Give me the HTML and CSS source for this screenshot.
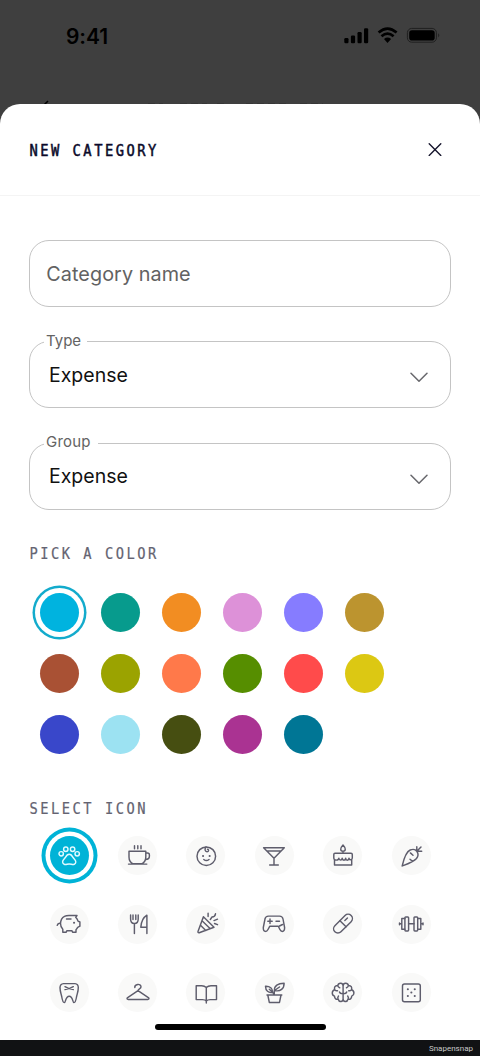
FILE: index.html
```html
<!DOCTYPE html>
<html lang="en">
<head>
<meta charset="utf-8">
<title>New category</title>
<link rel="stylesheet" href="styles.css">
</head>
<body>
<div class="screen">
  <div class="backdrop">
    <div class="status">
      <span class="time">9:41</span>
      <svg class="status-icons" width="98" height="18" viewBox="0 0 98 18">
        <rect x="0.3" y="11" width="4.2" height="5.2" rx="1.2"/>
        <rect x="6.9" y="8.5" width="4.2" height="7.7" rx="1.2"/>
        <rect x="13.5" y="5" width="4.2" height="11.2" rx="1.2"/>
        <rect x="20" y="1.3" width="4.2" height="14.9" rx="1.2"/>
        <path d="M34.6 5.6Q43.500-2.200 52.600 5.600M37.500 9.200Q43.500 4 49.600 9.200" fill="none" stroke="#000" stroke-width="2.700"/>
        <path d="M40 12Q43.500 9.200 47.100 12L43.500 16Z"/>
        <rect x="63.400" y="1.400" width="29" height="13.800" rx="4.300" fill="none" stroke="#202020" stroke-width="1"/>
        <rect x="65.200" y="3.200" width="25.500" height="10.300" rx="2.800"/>
        <path d="M94.200 6.200Q96.400 8.200 94.200 10.400Z" fill="#202020"/>
      </svg>
    </div>
    <svg class="nav-hint" width="480" height="8" viewBox="0 0 480 8">
      <path d="M48 5L41 12" fill="none" stroke="#000" stroke-width="1.500"/>
      <path d="M148 7.600H163M180 7.600H207M217 7.600H228M246 7.600H288M300 7.600H323" stroke="#363636" stroke-width="1" stroke-dasharray="7 4"/>
    </svg>
  </div>
  <main class="sheet">
    <header class="sheet-head">
      <h1 class="mono title">NEW CATEGORY</h1>
      <svg class="close" width="14" height="14" viewBox="0 0 14 14"><path d="M1.200 .8L12.800 12.400M12.800 .8L1.200 12.400"/></svg>
    </header>
    <div class="form">
      <div class="field"><span class="placeholder">Category name</span></div>
      <div class="field">
        <span class="label label-type">Type</span><span class="value">Expense</span>
        <svg class="chevron" width="18" height="11" viewBox="0 0 18 11"><path d="M1 1.200L9 9.300L17 1.200"/></svg>
      </div>
      <div class="field">
        <span class="label label-group">Group</span><span class="value">Expense</span>
        <svg class="chevron" width="18" height="11" viewBox="0 0 18 11"><path d="M1 1.200L9 9.300L17 1.200"/></svg>
      </div>
    </div>
    <h2 class="mono section">PICK A COLOR</h2>
    <div class="colors">
      <i class="swatch cyan picked"></i><i class="swatch teal"></i><i class="swatch orange"></i><i class="swatch pink"></i><i class="swatch violet"></i><i class="swatch bronze"></i>
      <i class="swatch rust"></i><i class="swatch olive"></i><i class="swatch coral"></i><i class="swatch green"></i><i class="swatch red"></i><i class="swatch yellow"></i>
      <i class="swatch blue"></i><i class="swatch sky"></i><i class="swatch moss"></i><i class="swatch magenta"></i><i class="swatch petrol"></i>
    </div>
    <h2 class="mono section section-icons">SELECT ICON</h2>
    <div class="icons">
      <div class="icon chosen"><svg viewBox="0 0 24 24"><circle cx="4.200" cy="9.800" r="2.200"/><circle cx="8.800" cy="5.200" r="2.200"/><circle cx="15.600" cy="5.200" r="2.200"/><circle cx="20.200" cy="9.800" r="2.200"/><path d="M12.200 10.200C10 10.200 9.400 11.500 8.600 13.200C7.700 14.800 5.400 15.700 5.600 18C5.800 20.500 8.200 20.800 10 20.200Q12.200 19.600 14.400 20.200C16.400 20.800 18.700 20.400 18.800 18C18.900 15.700 16.700 14.800 15.800 13.200C15 11.500 14.400 10.200 12.200 10.200Z"/></svg></div>
      <div class="icon"><svg viewBox="0 0 24 24"><path d="M3 7.200H19.800V13Q19.800 18 15.500 19.800H7.200Q3 18 3 13ZM19.800 9H21.500Q23.400 9 23.400 11V12.200Q23.400 15.400 19.500 15.400M2.500 20.100H20.800M8.500 1.700V4.700M11.800 1.700V4.700M15 1.700V4.700"/></svg></div>
      <div class="icon"><svg viewBox="0 0 24 24"><circle cx="12.300" cy="12.200" r="9.300"/><path d="M12 3C10.300 5.200 11 7.700 13 7.700C15 7.700 15 5.200 13.500 5.200M9.800 15.500Q12.400 17.700 15 15.500"/><path class="dots" d="M9 12H9.100M15.600 12H15.700"/></svg></div>
      <div class="icon"><svg viewBox="0 0 24 24"><path d="M1.600 3.800H22.300L12 14.300ZM4.900 7H19M12 14.300V21M7.700 21H16.300"/></svg></div>
      <div class="icon"><svg viewBox="0 0 24 24"><path d="M12 1C9 4.200 9 7.200 12 7.200S15 4.200 12 1ZM12 7.200V9.200M4 9.200H20Q21.300 9.200 21.300 10.500V14C21.300 16.200 18.300 16.500 18 14.200C17.700 16.800 14.900 16.800 14.700 14.200C14.400 16.800 11.500 16.800 11.200 14.200C10.900 16.800 8.100 16.600 7.900 14.200C7.600 16.600 2.800 17 2.800 14V10.500Q2.800 9.200 4 9.200M3.500 16V20.900H20.700V16"/></svg></div>
      <div class="icon"><svg viewBox="0 0 24 24"><path d="M3.200 21.900C4.600 15.800 6.400 8 11.200 6Q15.700 4.200 18 7.500Q20.300 11 17.500 14.500C14.500 18 8.500 20 3.200 21.900ZM17.800 7.300V2.700M17.800 7.300L22 3M17.800 7.300H22.700M11.400 8.900L14 11.200M11 15.200L13.600 17.400"/></svg></div>

      <div class="icon"><svg viewBox="0 0 24 24"><path d="M7.500 4.300Q9 3.500 12 3.500H20L18.700 5.300Q20.500 7 21 9.200L22.900 10V14.200L20.700 15.300Q20.300 16.500 19 17.700V20.300H15.600L15 18.800H9.800L9.200 20.300H5.800V17.200Q3.500 15 3.500 11.500Q3.700 6.300 7.500 4.300ZM3.500 11.300Q.8 10.800.2 13.300M9.500 7H14"/><path class="dots" d="M17 10.800H17.100"/></svg></div>
      <div class="icon"><svg viewBox="0 0 24 24"><path d="M4.600 3V7Q4.600 11.500 8.400 11.500T12.200 7V3M7 3V7.500M9.800 3V7.500M8.400 11.500V21.500M20.900 21.500V3.200Q15.500 6.500 14.800 15.200H20.900"/></svg></div>
      <div class="icon"><svg viewBox="0 0 24 24"><path d="M9.400 4.700L20 15.300L5.200 20.700Q3.700 21 4 19.500ZM8 8.800L16.300 16.700M6.500 13.200L11.800 18.400M14.100 4.500V1.200M16.300 7.500L18 5Q21 5 21.500 1.800M20 8.600L23.500 7.200M20.500 11.500L23.500 12.700"/></svg></div>
      <div class="icon"><svg viewBox="0 0 24 24"><path d="M6.500 4.100H17.500Q20.500 4.100 21 7L22.600 15.500Q22.700 19.400 20.300 19.400Q18.800 19.400 17.900 17.500L16.300 14.300H7.700L6 17.500Q5 19.400 3.500 19.400Q1.100 19.300 1.300 15.500L3 7Q3.500 4.100 6.500 4.100ZM5.800 9.200H10.200M8 7V11.400M14 9.200H17.500M17.500 14L20.500 12.500"/></svg></div>
      <div class="icon"><svg viewBox="0 0 24 24"><g transform="rotate(-45 12 11.700)"><rect x=".5" y="7.400" width="23" height="8.600" rx="4.300"/><path d="M12 7.400V16M15.500 10.800H19.200"/></g></svg></div>
      <div class="icon"><svg viewBox="0 0 24 24"><rect x="5.900" y="4.900" width="3.700" height="14" rx=".8"/><rect x="15" y="4.900" width="3.700" height="14" rx=".8"/><path d="M5.900 6.500H2.800V17.200H5.900M18.700 6.500H21.800V17.200H18.700M9.600 11.800H15M.5 11V12.700M24 11V12.700M.5 11.800H2.800M21.800 11.800H24"/></svg></div>

      <div class="icon"><svg viewBox="0 0 24 24"><path d="M6.500 2.600Q9 2.600 12.200 2.600T18 2.600Q21.200 2.800 21.300 6.500C21.300 10.500 20.200 12.500 19.600 15.500C19 19.200 18.300 21.600 17 21.600C15.300 21.600 16.200 15.200 12.200 15.200S9 21.600 7.300 21.600C6 21.600 5.300 19.200 4.700 15.500C4.100 12.500 3 10.500 3 6.500Q3.200 2.800 6.500 2.600ZM8 5.700Q12 8.200 16.300 8.600M8 8.600Q12 8.200 16.300 5.700"/></svg></div>
      <div class="icon"><svg viewBox="0 0 24 24"><path d="M8.800 6.500C8.500 3 14.800 2.100 15 5.700C15.100 7.900 12 7.700 12 9.700L22.700 16.800Q23.500 18.400 21.800 18.400H2.200Q.5 18.400 1.300 16.800L12 9.700"/></svg></div>
      <div class="icon"><svg viewBox="0 0 24 24"><path d="M12.300 6.500Q10.500 4.800 7.700 4.800H2.200V18.600H8.500Q11.200 18.600 12.300 20Q13.500 18.600 16.200 18.600H22.500V4.800H17Q14.100 4.800 12.300 6.500V22"/></svg></div>
      <div class="icon"><svg viewBox="0 0 24 24"><path d="M5.800 14H19L17.500 21.400H7.300ZM5 14H19.800M12.300 14V9.500M12.500 9.500C12 4.500 16 2.400 22.100 2.200C22.200 7.500 18.500 11 12.500 9.500ZM12.500 9.500L17.500 6M10.700 11.300C10.700 7.500 8 5 3.500 5.200C3.600 9.800 6.300 12.200 10.700 11.300ZM10.700 11.300L12.300 14M7.300 8.200L10.700 11.300"/></svg></div>
      <div class="icon"><svg viewBox="0 0 24 24"><path d="M12.100 5C12.100 1.600 7.500 1.400 6.800 4.500C4 4.300 3 6.600 3.700 8.700C.5 9.800.5 14 3.500 15.100C3.500 17.800 5.300 18.700 7.200 18.300C8 21.500 12.100 21.200 12.100 18ZM12.100 5C12.100 1.600 16.700 1.400 17.400 4.500C20.200 4.300 21.200 6.600 20.500 8.700C23.700 9.800 23.700 14 20.700 15.100C20.700 17.800 18.900 18.700 17 18.300C16.200 21.500 12.100 21.200 12.100 18ZM6.800 4.500Q7 6.300 8.700 6.800M17.400 4.500Q17.200 6.300 15.500 6.800M3.700 8.700Q5 10.200 6.500 9.700M20.500 8.700Q19.200 10.200 17.700 9.700M7.200 18.300Q6.200 16.500 7.500 15M17 18.300Q18 16.500 16.700 15M8.500 11Q9 12.700 12.100 12.700T15.700 11"/></svg></div>
      <div class="icon"><svg viewBox="0 0 24 24"><rect x="3.500" y="2.900" width="17.800" height="17.800" rx="2"/><path class="dots" d="M8.800 8.200H8.900M15.700 8.200H15.800M12.300 11.600H12.400M8.800 15H8.900M15.700 15H15.800"/></svg></div>
    </div>
    <div class="home-bar"></div>
  </main>
  <footer class="credit">Snapensnap</footer>
</div>
</body>
</html>
```
FILE: styles.css
```css
* { box-sizing: border-box; }
body { margin: 0; background: #3f3f3f; font-family: Inter, "Liberation Sans", sans-serif; }
.screen { width: 480px; height: 1056px; display: flex; flex-direction: column; overflow: hidden; }

.backdrop { height: 104px; display: flex; flex-direction: column; justify-content: space-between; flex: none; }
.status { display: flex; justify-content: space-between; align-items: flex-start; padding: 24px 38px 0 66px; }
.time { font-size: 21px; font-weight: 600; line-height: 25px; letter-spacing: -0.1px; color: #000; }
.status-icons { margin-top: 3px; }
.nav-hint { display: block; }

.sheet { flex: 1; background: #fff; border-radius: 20px 20px 0 0; display: flex; flex-direction: column; }
.sheet-head { height: 92px; flex: none; display: flex; align-items: center; justify-content: space-between; padding: 0 38px 0 29px; border-bottom: 1px solid #f4f4f4; }
/* Slightly condensed, widely tracked monospace for the headings */
.mono { margin: 0; font-family: "DejaVu Sans Mono", "Liberation Mono", monospace; font-size: 15px; letter-spacing: 2.750px; line-height: 18px; font-weight: 400; transform: translate(0.400px, 0.600px) scaleX(0.916); transform-origin: left center; white-space: nowrap; }
.title { color: #0b0a2a; -webkit-text-stroke: 0.500px #0b0a2a; }
.close { fill: none; stroke: #14132b; stroke-width: 1.350; stroke-linecap: round; }

.form { padding: 44px 29px 0; display: flex; flex-direction: column; gap: 34.400px; }
.field { position: relative; height: 67px; border: 1.500px solid #c4c4c4; border-radius: 20px; display: flex; align-items: center; justify-content: space-between; padding: 0 22px 0 19px; }
.placeholder { margin-left: -2.700px; font-size: 19.800px; letter-spacing: 0.070px; color: #626262; }
.value { font-size: 19.500px; color: #111; }
.label { position: absolute; left: 14px; top: -11.500px; height: 20px; line-height: 20px; padding-left: 2px; background: #fff; font-size: 15px; color: #636363; }
.label-type { width: 43px; }
.label-group { width: 54px; letter-spacing: 0.200px; }
.chevron { margin-top: 6px; fill: none; stroke: #68686d; stroke-width: 1.500; stroke-linecap: round; stroke-linejoin: round; }

.section { color: #646371; margin: 34.200px 0 0 29px; -webkit-text-stroke: 0.200px #646371; }
.colors { display: grid; grid-template-columns: repeat(6, 39px); gap: 22px; margin: 31px 0 0 40px; }
.swatch { width: 39px; height: 39px; border-radius: 50%; background: currentColor; }
.picked { box-shadow: 0 0 0 5px #fff, 0 0 0 7.500px #13abcc; }
.cyan { color: #00b3df; }
.teal { color: #079b8d; }
.orange { color: #f28d22; }
.pink { color: #dd91d8; }
.violet { color: #867cff; }
.bronze { color: #bc942f; }
.rust { color: #a95134; }
.olive { color: #9ba300; }
.coral { color: #ff794a; }
.green { color: #568e00; }
.red { color: #ff4b4b; }
.yellow { color: #dcc813; }
.blue { color: #3947ca; }
.sky { color: #9ce2f2; }
.moss { color: #464e11; }
.magenta { color: #aa3392; }
.petrol { color: #007695; }

.section-icons { margin-top: 45px; }
.icons { display: grid; grid-template-columns: repeat(6, 39px); column-gap: 29.400px; row-gap: 29.400px; margin: 19.500px 0 0 49.700px; }
.icon { width: 39px; height: 39px; border-radius: 50%; background: #f9f9f8; display: grid; place-items: center; color: #5e5d6c; }
.icon svg { width: 24px; height: 24px; overflow: visible; fill: none; stroke: currentColor; stroke-width: 1.450; stroke-linecap: round; stroke-linejoin: round; }
.icon .dots { stroke-width: 2; }
.chosen { background: #00b3d7; color: #e2faff; box-shadow: 0 0 0 4.500px #fff, 0 0 0 8.500px #00b3d7; }

.home-bar { width: 171px; height: 6px; border-radius: 3px; background: #000; margin: auto auto 10px 155px; }
.credit { height: 16px; flex: none; background: #111214; color: #c9c9c9; font: 8px/18px Roboto, sans-serif; text-align: right; padding-right: 7px; }
```
